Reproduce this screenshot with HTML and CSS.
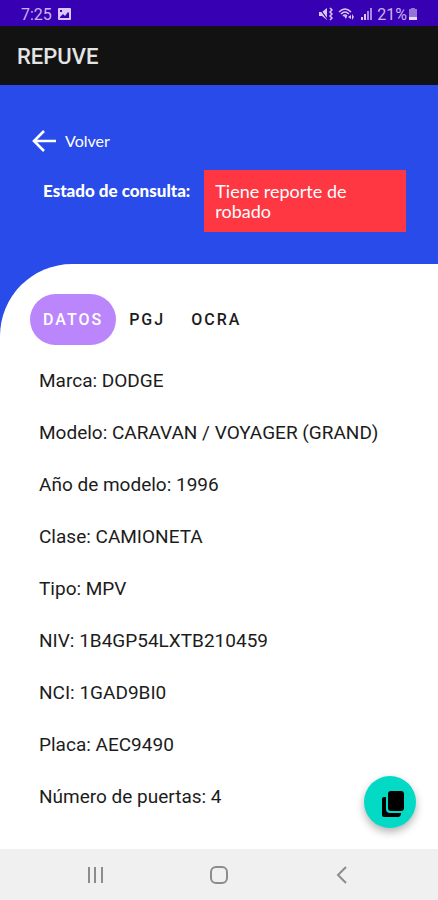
FILE: index.html
```html
<!DOCTYPE html>
<html lang="es">
<head>
    <meta charset="UTF-8">
    <meta name="viewport" content="width=device-width, initial-scale=1.0">
    <title>REPUVE</title>
    <link rel="stylesheet" href="styles.css">
</head>
<body>
    <!-- Barra de estado -->
    <div class="status-bar">
        <span>7:25</span>
        <svg class="picture" width="13" height="12" viewBox="0 0 13 12">
            <rect width="13" height="12" rx="1" fill="#d9c8f5"/>
            <path d="M2 9l3-3 2 2 3-4 1 1v5H2z" fill="#3700b3"/>
            <path d="M2 2h2v2H2z" fill="#3700b3"/>
        </svg>
        <div class="status-icons">
            <svg width="15" height="14" viewBox="0 0 15 14">
                <path d="M1 5h3l5-4v12L4 9H1z" fill="#d9c8f5"/>
                <path d="M1 1l9 12" stroke="#3700b3" stroke-width="1.2"/>
                <path d="M12 1l2 2-2 2 2 2-2 2 2 2-2 2" fill="none" stroke="#d9c8f5" stroke-width="1.5"/>
            </svg>
            <svg width="17" height="14" viewBox="0 0 17 14">
                <path d="M1 5q6-6 12 0M3 7q4-4 8 0M5 9q2-2 4 0" fill="none" stroke="#d9c8f5" stroke-width="1.4"/>
                <path d="M6 9h3l-1 3zM13 8v4l-3-2zM14 7l2 3-2 3z" fill="#d9c8f5"/>
            </svg>
            <svg width="12" height="14" viewBox="0 0 12 14">
                <path d="M1 10h2v3H1zM4 7h2v6H4z" fill="#d9c8f5"/>
                <path d="M7 4h2v9H7zM10 1h2v12h-2z" fill="#a78be0"/>
            </svg>
            <span>21%</span>
            <svg class="battery" width="10" height="14" viewBox="0 0 10 14">
                <path d="M3 1h4v1h2v8H1V2h2z" fill="#9375d6"/>
                <path d="M1 10h8v3H1z" fill="#e6dcfa"/>
            </svg>
        </div>
    </div>

    <header class="app-bar">
        <h1>REPUVE</h1>
    </header>

    <main class="content">
        <section class="hero">
            <a class="back" href="#">
                <svg width="25" height="22" viewBox="0 0 25 22">
                    <path d="M12 1L2 11l10 10M2 11h22" fill="none" stroke="#fff" stroke-width="2.6"/>
                </svg>
                Volver
            </a>
            <div class="report">
                <span class="report-label">Estado de consulta:</span>
                <p class="report-status">Tiene reporte de robado</p>
            </div>
        </section>

        <!-- Datos del vehículo -->
        <section class="panel">
            <div class="tabs">
                <button type="button" class="tab active">DATOS</button>
                <button type="button" class="tab">PGJ</button>
                <button type="button" class="tab">OCRA</button>
            </div>
            <ul class="data-list">
                <li>Marca: DODGE</li>
                <li>Modelo: CARAVAN / VOYAGER (GRAND)</li>
                <li>Año de modelo: 1996</li>
                <li>Clase: CAMIONETA</li>
                <li>Tipo: MPV</li>
                <li>NIV: 1B4GP54LXTB210459</li>
                <li>NCI: 1GAD9BI0</li>
                <li>Placa: AEC9490</li>
                <li>Número de puertas: 4</li>
            </ul>
            <button type="button" class="copy-btn" aria-label="Copiar">
                <svg width="24" height="28" viewBox="0 0 24 28">
                    <path d="M1 9q0-2 2-2h2v12q0 4 4 4h11q0 4-3 4H3q-2 0-2-2z"/>
                    <rect x="7" y="1" width="16" height="20" rx="3"/>
                </svg>
            </button>
        </section>
    </main>

    <!-- Botones de navegación -->
    <nav class="nav-bar">
        <button type="button" aria-label="Recientes">
            <svg width="18" height="18" viewBox="0 0 18 18">
                <path d="M3 1v16M9 1v16M16 1v16" stroke="#8c8c8c" stroke-width="2"/>
            </svg>
        </button>
        <button type="button" aria-label="Inicio">
            <svg width="20" height="20" viewBox="0 0 20 20">
                <rect x="2" y="2" width="16" height="16" rx="5" fill="none" stroke="#8c8c8c" stroke-width="2"/>
            </svg>
        </button>
        <button type="button" aria-label="Atrás">
            <svg width="18" height="18" viewBox="0 0 18 18">
                <path d="M12 1L4 9l8 8" fill="none" stroke="#8c8c8c" stroke-width="2"/>
            </svg>
        </button>
    </nav>
</body>
</html>
```

FILE: styles.css
```css
* {
    box-sizing: border-box;
}
body {
    font-family: Roboto, sans-serif;
    background-color: #fff;
    color: #1c1c1c;
    display: flex;
    flex-direction: column;
    min-height: 100vh;
    margin: 0;
}
svg {
    display: block;
}
button {
    border: none;
    padding: 0;
    background: none;
    font-family: inherit;
    cursor: pointer;
}
.status-bar {
    display: flex;
    align-items: center;
    height: 26px;
    padding: 2px 20px 0 21px;
    background-color: #3700b3;
    color: #c9b6f0;
    font-size: 16px;
}
.picture {
    margin-left: 6px;
}
.status-icons {
    display: flex;
    align-items: center;
    gap: 5px;
    margin-left: auto;
}
.battery {
    margin-left: -4px;
}
.app-bar {
    display: flex;
    align-items: center;
    height: 59px;
    padding: 2px 17px 0;
    background-color: #121212;
}
.app-bar h1 {
    margin: 0;
    color: #e4e4e4;
    font-size: 22px;
    font-weight: 500;
}
.content {
    flex: 1;
    display: flex;
    flex-direction: column;
    background-color: #284bea;
}
.hero {
    padding: 44px 32px 32px;
    color: #fff;
    font-family: Lato, sans-serif;
}
.back {
    display: flex;
    align-items: center;
    gap: 8px;
    width: fit-content;
    height: 24px;
    color: #fff;
    font-size: 16px;
    line-height: 20px;
    text-decoration: none;
}
.report {
    display: flex;
    align-items: flex-start;
    gap: 14px;
    margin-top: 17px;
    padding-left: 11px;
}
.report-label {
    flex: none;
    padding-top: 11px;
    font-size: 17px;
    font-weight: 900;
    line-height: 20px;
}
.report-status {
    flex: 1;
    margin: 0;
    padding: 11px;
    background-color: #ff3743;
    font-size: 18px;
    line-height: 20px;
}
.panel {
    position: relative;
    flex: 1;
    padding: 30px 30px 24px;
    background-color: #fff;
    border-top-left-radius: 72px;
}
.tabs {
    display: flex;
}
.tab {
    height: 51px;
    padding: 0 13px;
    border-radius: 26px;
    color: #1c1c1c;
    font-size: 16px;
    font-weight: 500;
    letter-spacing: 2px;
}
.tab.active {
    background-color: #bb86fc;
    color: #fff;
}
.data-list {
    list-style: none;
    margin: 10px 0 0;
    padding: 0 0 0 9px;
    font-size: 19px;
    line-height: 52px;
}
.copy-btn {
    position: absolute;
    right: 22px;
    bottom: 21px;
    display: flex;
    align-items: center;
    justify-content: center;
    width: 52px;
    height: 52px;
    padding: 4px 0 0 5px;
    border-radius: 50%;
    background-color: #03dac5;
    box-shadow: 0 4px 8px rgba(0, 0, 0, 0.3);
}
.nav-bar {
    display: flex;
    justify-content: space-around;
    align-items: center;
    height: 51px;
    padding: 0 34px;
    background-color: #f0f0f0;
}
```
